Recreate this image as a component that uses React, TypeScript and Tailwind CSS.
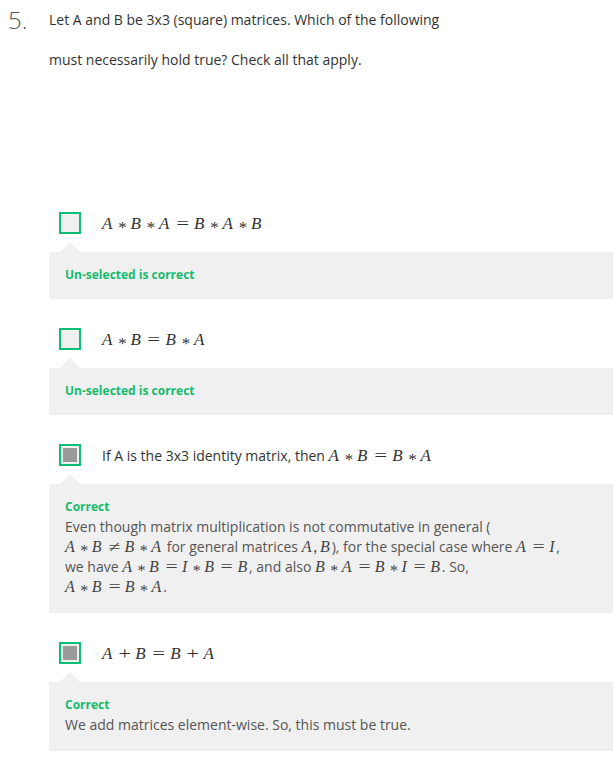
import React from "react";

const GREEN = "text-[#14bb6f]";

function V({ children }: { children: React.ReactNode }) {
  return <span className="italic pr-[0.12em]">{children}</span>;
}

// asterisk operator, lowered to the math axis
function Star() {
  return (
    <span className="mx-[0.222em] inline-block not-italic leading-[0.6em] translate-y-[0.24em]">*</span>
  );
}

function Bin({ children }: { children: React.ReactNode }) {
  return <span className="mx-[0.33em] inline-block not-italic scale-x-[1.3]">{children}</span>;
}

function Rel({ children }: { children: React.ReactNode }) {
  return <span className="mx-[0.385em] inline-block not-italic scale-x-[1.35]">{children}</span>;
}

function M({ children, size = "opt" }: { children: React.ReactNode; size?: "opt" | "txt" }) {
  return (
    <span
      className={
        size === "opt"
          ? "font-['Liberation_Serif',serif] text-[17px] leading-none text-[#333] whitespace-nowrap"
          : "font-['Liberation_Serif',serif] text-[16px] leading-none text-[#444] whitespace-nowrap"
      }
    >
      {children}
    </span>
  );
}

function Checkbox({ checked }: { checked: boolean }) {
  return (
    <div className="w-[22px] h-[22px] shrink-0 border-2 border-[#0cbf74] bg-[#f0f0f0] p-[2px]">
      {checked && <div className="w-full h-full bg-[#9a9a9a]" />}
    </div>
  );
}

function Option({
  checked,
  label,
  title,
  children,
}: {
  checked: boolean;
  label: React.ReactNode;
  title: string;
  children?: React.ReactNode;
}) {
  return (
    <div>
      <div className="flex items-center h-[22px] pl-[10px]">
        <Checkbox checked={checked} />
        <div className="ml-[21px] text-[14px] text-[#333] whitespace-nowrap">{label}</div>
      </div>
      <div className="mt-2 ml-[11px] w-0 h-0 border-l-[10px] border-r-[10px] border-b-[10px] border-l-transparent border-r-transparent border-b-[#f0f0f0]" />
      <div className={`bg-[#f0f0f0] px-4 pt-[13px] leading-5 ${children ? "pb-4" : "pb-[14px]"}`}>
        <div className={`text-[12px] font-bold ${GREEN}`}>{title}</div>
        {children && <div className="text-[14px] text-[#555]">{children}</div>}
      </div>
    </div>
  );
}

export default function App() {
  return (
    <div className="w-[613px] h-[758px] overflow-hidden bg-white font-['Open_Sans',sans-serif]">
      <div className="flex">
        <div className="w-[49px] pl-2 text-[24px] leading-[40px] font-light text-[#555]">5.</div>
        <div className="w-[410px] text-[14px] leading-[40px] text-[#333]">
          Let A and B be 3x3 (square) matrices. Which of the following must necessarily hold true? Check all that
          apply.
        </div>
      </div>

      <div className="ml-[49px] mt-[132px] flex flex-col gap-[29px]">
        <Option
          checked={false}
          title="Un-selected is correct"
          label={
            <M>
              <V>A</V>
              <Star />
              <V>B</V>
              <Star />
              <V>A</V>
              <Rel>=</Rel>
              <V>B</V>
              <Star />
              <V>A</V>
              <Star />
              <V>B</V>
            </M>
          }
        />
        <Option
          checked={false}
          title="Un-selected is correct"
          label={
            <M>
              <V>A</V>
              <Star />
              <V>B</V>
              <Rel>=</Rel>
              <V>B</V>
              <Star />
              <V>A</V>
            </M>
          }
        />
        <Option
          checked={true}
          title="Correct"
          label={
            <>
              If A is the 3x3 identity matrix, then{" "}
              <M>
                <V>A</V>
                <Star />
                <V>B</V>
                <Rel>=</Rel>
                <V>B</V>
                <Star />
                <V>A</V>
              </M>
            </>
          }
        >
          Even though matrix multiplication is not commutative in general (
          <br />
          <M size="txt">
            <V>A</V>
            <Star />
            <V>B</V>
            <Rel>≠</Rel>
            <V>B</V>
            <Star />
            <V>A</V>
          </M>{" "}
          for general matrices{" "}
          <M size="txt">
            <V>A</V>,<span className="ml-[0.167em]" />
            <V>B</V>
          </M>
          ), for the special case where{" "}
          <M size="txt">
            <V>A</V>
            <Rel>=</Rel>
            <V>I</V>
          </M>
          ,
          <br />
          we have{" "}
          <M size="txt">
            <V>A</V>
            <Star />
            <V>B</V>
            <Rel>=</Rel>
            <V>I</V>
            <Star />
            <V>B</V>
            <Rel>=</Rel>
            <V>B</V>
          </M>
          , and also{" "}
          <M size="txt">
            <V>B</V>
            <Star />
            <V>A</V>
            <Rel>=</Rel>
            <V>B</V>
            <Star />
            <V>I</V>
            <Rel>=</Rel>
            <V>B</V>
          </M>
          . So,
          <br />
          <M size="txt">
            <V>A</V>
            <Star />
            <V>B</V>
            <Rel>=</Rel>
            <V>B</V>
            <Star />
            <V>A</V>
          </M>
          .
        </Option>
        <Option
          checked={true}
          title="Correct"
          label={
            <M>
              <V>A</V>
              <Bin>+</Bin>
              <V>B</V>
              <Rel>=</Rel>
              <V>B</V>
              <Bin>+</Bin>
              <V>A</V>
            </M>
          }
        >
          We add matrices element-wise. So, this must be true.
        </Option>
      </div>
    </div>
  );
}
